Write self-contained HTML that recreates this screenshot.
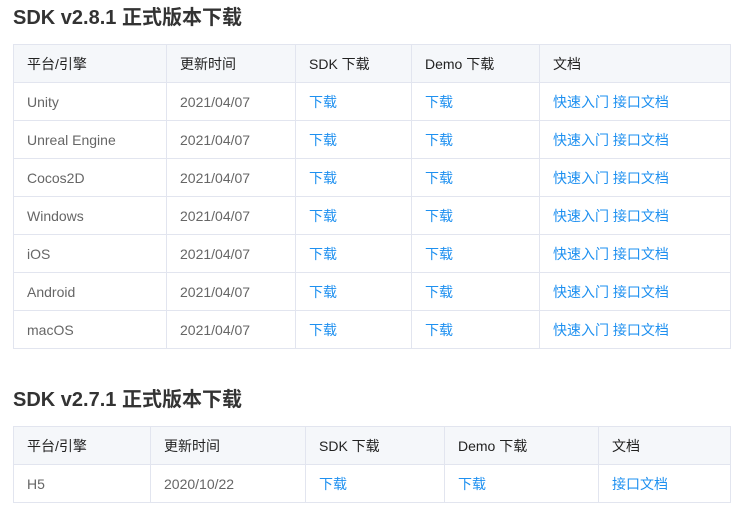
<!DOCTYPE html><html><head><meta charset="utf-8"><style>
body{margin:0;background:#fff;font-family:"Liberation Sans","Noto Sans CJK SC",sans-serif;}
h2{position:absolute;left:13px;margin:0;font-size:20px;font-weight:bold;color:#333;line-height:24px}
table{position:absolute;left:13px;width:718px;border-collapse:collapse;font-size:14px;table-layout:fixed}
td,th{border:1px solid #e2e5ef;height:37px;padding:0 0 0 13px;text-align:left;font-weight:normal;color:#666}
th{background:#f5f7fa;color:#222}
a{color:#1e90f0;text-decoration:none}
</style></head><body>
<h2 style="top:6px">SDK v2.8.1 正式版本下载</h2>
<table style="top:44px"><colgroup><col style="width:153px"><col style="width:129px"><col style="width:116px"><col style="width:128px"><col></colgroup>
<tr><th>平台/引擎</th><th>更新时间</th><th>SDK 下载</th><th>Demo 下载</th><th>文档</th></tr>
<tr><td>Unity</td><td>2021/04/07</td><td><a>下载</a></td><td><a>下载</a></td><td><a>快速入门</a> <a>接口文档</a></td></tr>
<tr><td>Unreal Engine</td><td>2021/04/07</td><td><a>下载</a></td><td><a>下载</a></td><td><a>快速入门</a> <a>接口文档</a></td></tr>
<tr><td>Cocos2D</td><td>2021/04/07</td><td><a>下载</a></td><td><a>下载</a></td><td><a>快速入门</a> <a>接口文档</a></td></tr>
<tr><td>Windows</td><td>2021/04/07</td><td><a>下载</a></td><td><a>下载</a></td><td><a>快速入门</a> <a>接口文档</a></td></tr>
<tr><td>iOS</td><td>2021/04/07</td><td><a>下载</a></td><td><a>下载</a></td><td><a>快速入门</a> <a>接口文档</a></td></tr>
<tr><td>Android</td><td>2021/04/07</td><td><a>下载</a></td><td><a>下载</a></td><td><a>快速入门</a> <a>接口文档</a></td></tr>
<tr><td>macOS</td><td>2021/04/07</td><td><a>下载</a></td><td><a>下载</a></td><td><a>快速入门</a> <a>接口文档</a></td></tr>
</table>
<h2 style="top:388px">SDK v2.7.1 正式版本下载</h2>
<table style="top:426px"><colgroup><col style="width:137px"><col style="width:155px"><col style="width:139px"><col style="width:154px"><col></colgroup>
<tr><th>平台/引擎</th><th>更新时间</th><th>SDK 下载</th><th>Demo 下载</th><th>文档</th></tr>
<tr><td>H5</td><td>2020/10/22</td><td><a>下载</a></td><td><a>下载</a></td><td><a>接口文档</a></td></tr>
</table>
</body></html>
